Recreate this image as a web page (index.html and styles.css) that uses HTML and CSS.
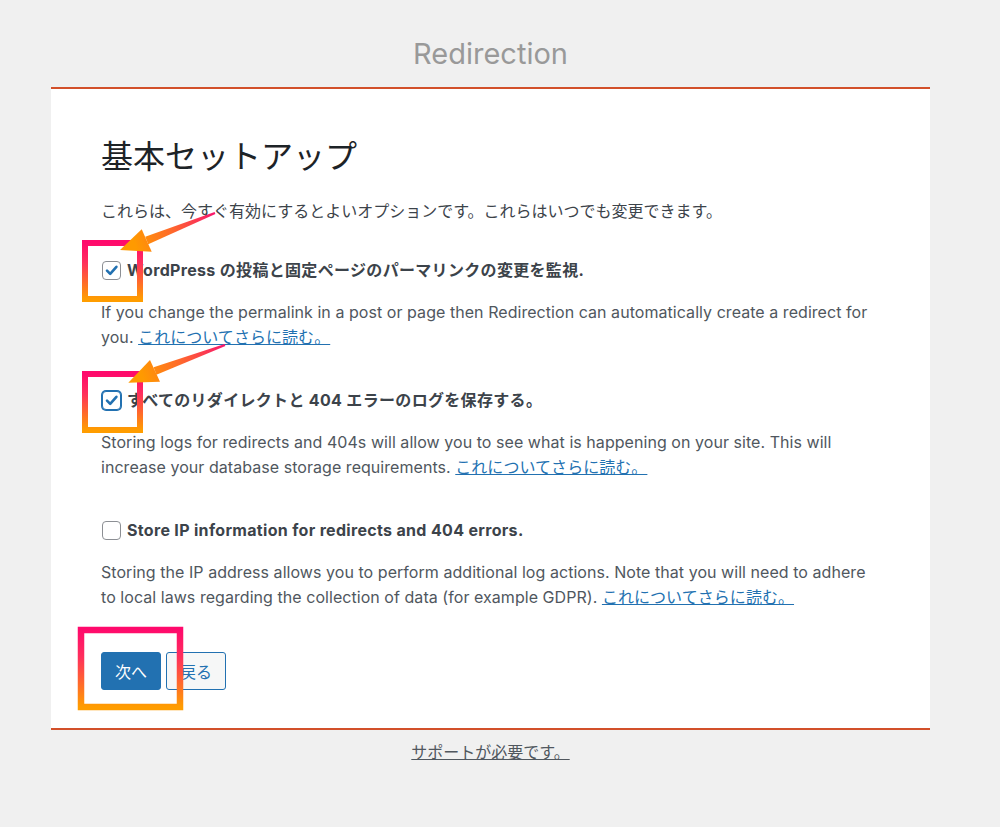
FILE: index.html
```html
<!DOCTYPE html>
<html lang="ja">
  <head>
    <meta charset="UTF-8" />
    <meta name="viewport" content="width=device-width, initial-scale=1.0" />
    <title>Redirection - 基本セットアップ</title>
    <link rel="stylesheet" href="styles.css">
  </head>
  <body>
    <div class="wrap">
      <h1 class="app-title">Redirection</h1>

      <div class="setup">
        <h2>基本セットアップ</h2>
        <p class="intro">これらは、今すぐ有効にするとよいオプションです。これらはいつでも変更できます。</p>

        <div class="option">
          <label class="option-label">
            <span class="check">
              <svg viewBox="0 0 17 17" width="17" height="17"><path d="M4 8.6l3.2 3.3L13.4 4.8" /></svg>
            </span>
            WordPress の投稿と固定ページのパーマリンクの変更を監視.
          </label>
          <p class="option-desc">
            If you change the permalink in a post or page then Redirection can automatically create a redirect for you.
            <a href="#">これについてさらに読む。</a>
          </p>
        </div>

        <div class="option">
          <label class="option-label">
            <span class="check focused">
              <svg viewBox="0 0 17 17" width="17" height="17"><path d="M4 8.6l3.2 3.3L13.4 4.8" /></svg>
            </span>
            すべてのリダイレクトと 404 エラーのログを保存する。
          </label>
          <p class="option-desc">
            Storing logs for redirects and 404s will allow you to see what is happening on your site. This will increase your database storage requirements.
            <a href="#">これについてさらに読む。</a>
          </p>
        </div>

        <div class="option">
          <label class="option-label">
            <span class="check"></span>
            Store IP information for redirects and 404 errors.
          </label>
          <p class="option-desc">
            Storing the IP address allows you to perform additional log actions. Note that you will need to adhere to local laws regarding the collection of data (for example GDPR).
            <a href="#">これについてさらに読む。</a>
          </p>
        </div>

        <div class="buttons">
          <button class="btn btn-primary" type="button">次へ</button>
          <button class="btn btn-secondary" type="button">戻る</button>
        </div>
      </div>

      <p class="support"><a href="#">サポートが必要です。</a></p>
    </div>

    <!-- annotation marks drawn over the screenshot -->
    <svg class="annotations" viewBox="0 0 1000 827" width="1000" height="827">
      <defs>
        <linearGradient id="boxGrad" x1="0" y1="0" x2="0" y2="1">
          <stop offset="0" stop-color="#ff0a6c" />
          <stop offset="0.35" stop-color="#ff2f5c" />
          <stop offset="1" stop-color="#ff9d00" />
        </linearGradient>
        <linearGradient id="arrow1" gradientUnits="userSpaceOnUse" x1="215" y1="213" x2="135" y2="245">
          <stop offset="0" stop-color="#f8156e" />
          <stop offset="0.55" stop-color="#ff6a2a" />
          <stop offset="1" stop-color="#ff9a00" />
        </linearGradient>
        <linearGradient id="arrow2" gradientUnits="userSpaceOnUse" x1="225" y1="345" x2="142" y2="376">
          <stop offset="0" stop-color="#f8156e" />
          <stop offset="0.55" stop-color="#ff6a2a" />
          <stop offset="1" stop-color="#ff9a00" />
        </linearGradient>
      </defs>

      <rect x="85" y="243" width="55" height="56" fill="none" stroke="url(#boxGrad)" stroke-width="6" />
      <rect x="85" y="374" width="55" height="56" fill="none" stroke="url(#boxGrad)" stroke-width="6" />
      <rect x="81" y="630" width="99" height="77" fill="none" stroke="url(#boxGrad)" stroke-width="6.5" />

      <g fill="url(#arrow1)">
        <polygon points="214.6,212.1 215.4,213.9 148.2,244.2 145.2,236.8" />
        <polygon points="120,250 141.7,229.3 151.7,251.7" />
      </g>
      <g fill="url(#arrow2)">
        <polygon points="224.6,344.1 225.4,345.9 156.4,374.7 153.6,367.3" />
        <polygon points="128.3,382.7 150,360 160,381.7" />
      </g>
    </svg>
  </body>
</html>
```

FILE: styles.css
```css
body {
  margin: 0;
  background-color: #f0f0f0;
  font-family: Inter, "Noto Sans CJK JP", sans-serif;
  font-size: 16px;
  color: #3c434a;
}
.wrap {
  width: 879px;
  margin-left: 51px;
  padding-top: 36px;
}
.app-title {
  margin: 0 0 15px;
  font-size: 29px;
  line-height: 36px;
  font-weight: 400;
  text-align: center;
  color: #999;
}
.setup {
  background-color: #fff;
  border-top: 2px solid #d2502a;
  border-bottom: 2px solid #d2502a;
  padding: 48px 50px 38px;
}
.setup h2 {
  margin: 0;
  font-size: 32px;
  line-height: 40px;
  font-weight: 400;
  color: #1d2327;
}
.intro {
  margin: 22px 0 0;
  line-height: 25px;
}
.option {
  margin-top: 34px;
}
.option + .option {
  margin-top: 38px;
}
.option-label {
  display: flex;
  align-items: center;
  font-weight: 700;
  letter-spacing: 0.32px;
  line-height: 25px;
}
.check {
  box-sizing: border-box;
  flex-shrink: 0;
  width: 19px;
  height: 19px;
  margin: 0 6px 0 1px;
  border: 1px solid #8c8f94;
  border-radius: 4px;
  background-color: #fff;
  display: flex;
  align-items: center;
  justify-content: center;
}
.check.focused {
  border-color: #2271b1;
  box-shadow: 0 0 0 1px #2271b1;
}
.check path {
  fill: none;
  stroke: #2271b1;
  stroke-width: 2.6;
  stroke-linecap: round;
  stroke-linejoin: round;
}
.option-desc {
  margin: 17px 0 0;
  line-height: 25px;
  letter-spacing: 0.05px;
  color: #50575e;
}
a {
  color: #2271b1;
}
.buttons {
  display: flex;
  gap: 5px;
  margin-top: 42px;
}
.btn {
  height: 38px;
  padding: 0 13px;
  font-family: inherit;
  font-size: 16px;
  border: 1px solid #2271b1;
  border-radius: 3px;
  cursor: pointer;
}
.btn-primary {
  background-color: #2271b1;
  color: #fff;
}
.btn-secondary {
  background-color: #f6f7f7;
  color: #2271b1;
}
.support {
  margin: 10px 0 0;
  line-height: 25px;
  text-align: center;
}
.support a {
  color: #50575e;
}
.annotations {
  position: absolute;
  top: 0;
  left: 0;
  pointer-events: none;
}
```
